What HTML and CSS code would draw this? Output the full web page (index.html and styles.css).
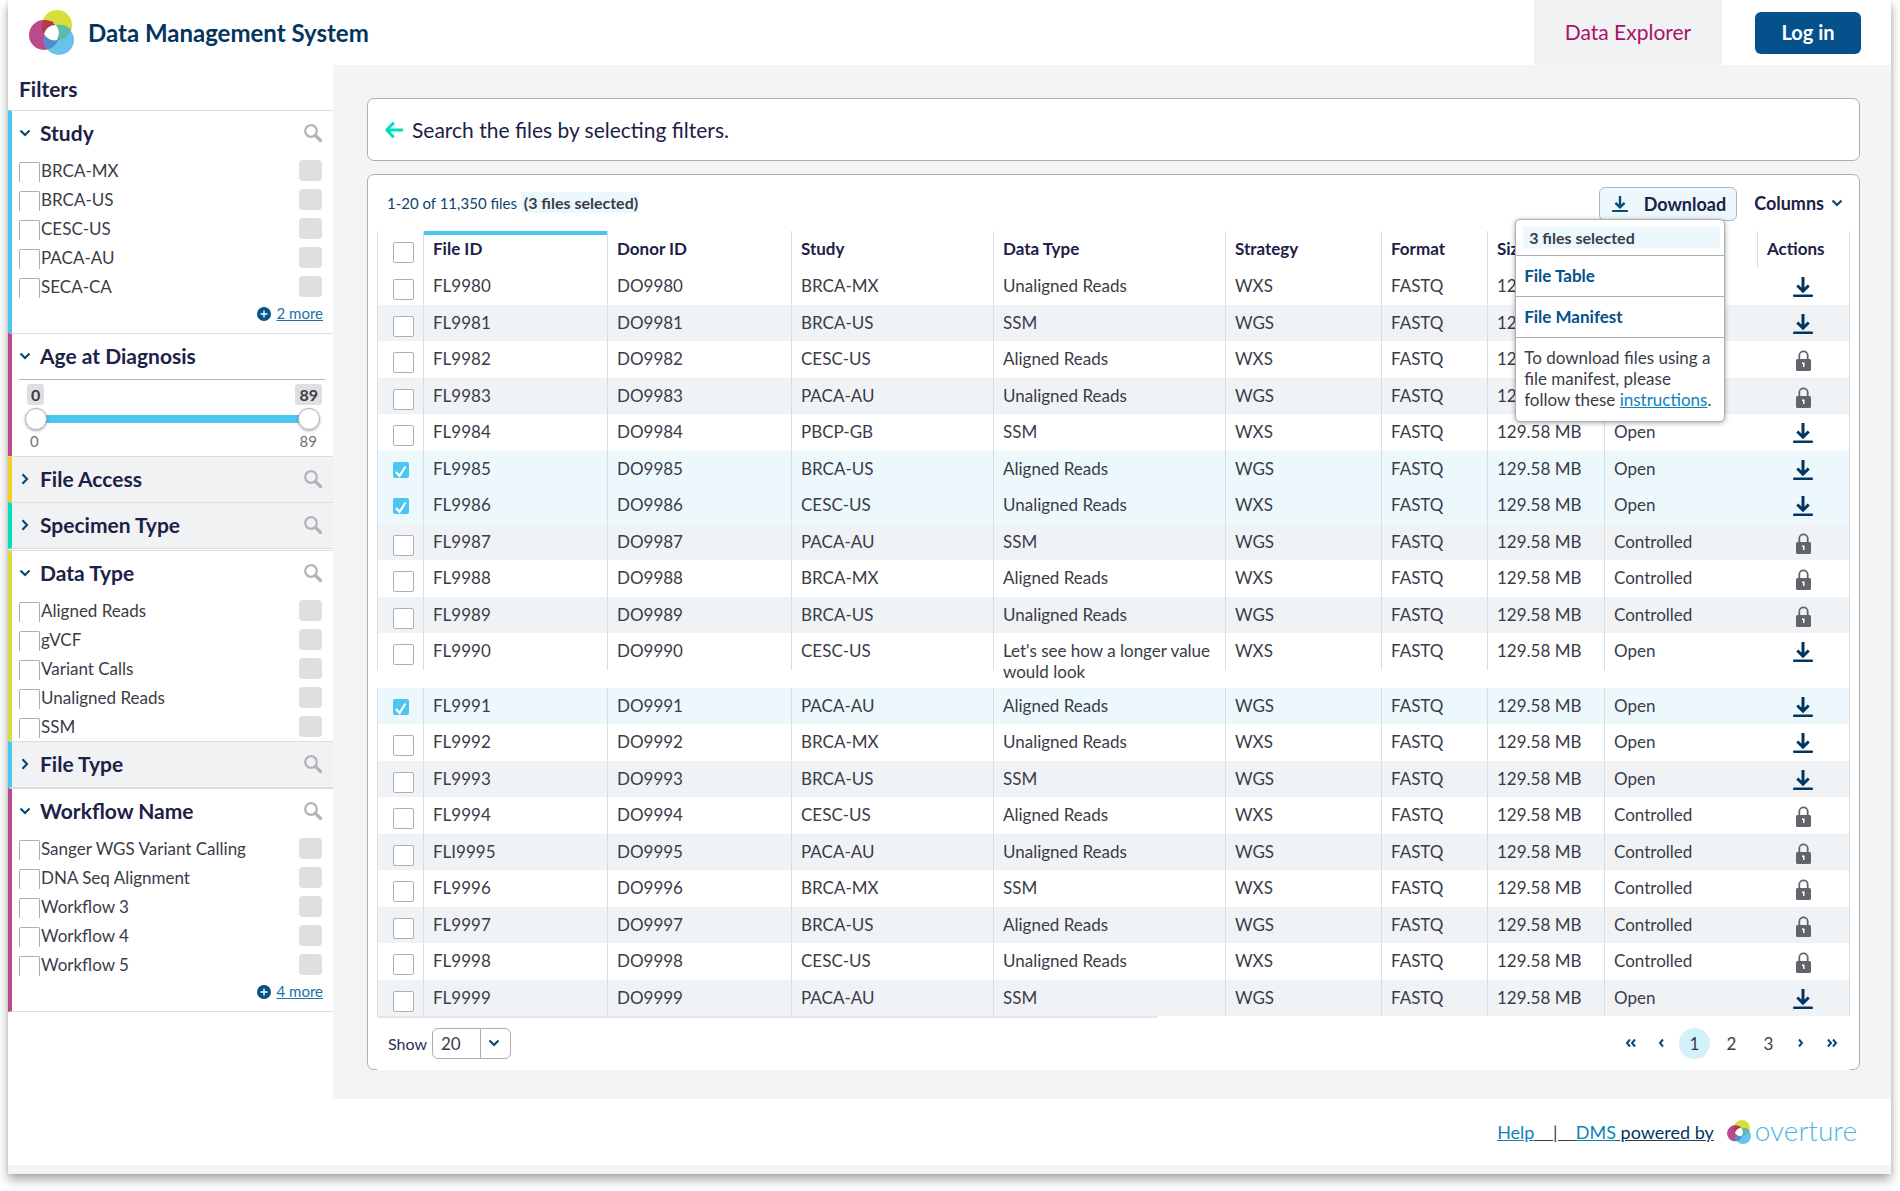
FILE: index.html
```html
<!DOCTYPE html>
<html lang="en">
<head>
<meta charset="utf-8">
<meta name="viewport" content="width=device-width, initial-scale=1">
<title>Data Management System</title>
<link rel="stylesheet" href="styles.css">
</head>
<body>
<svg class="sprite" aria-hidden="true">
  <defs>
    <clipPath id="clip-yellow"><circle cx="28" cy="15" r="15"/></clipPath>
    <clipPath id="clip-magenta"><circle cx="15" cy="25" r="15"/></clipPath>
  </defs>
  <symbol id="logo" viewBox="0 0 45 45">
    <circle cx="28" cy="15" r="15" fill="#d9df3a"/>
    <circle cx="15" cy="25" r="15" fill="#b94a8b"/>
    <circle cx="30" cy="30" r="15" fill="#68c3ea"/>
    <g clip-path="url(#clip-yellow)"><circle cx="15" cy="25" r="15" fill="#b23e4d"/><circle cx="30" cy="30" r="15" fill="#5dbba8"/></g>
    <g clip-path="url(#clip-magenta)"><circle cx="30" cy="30" r="15" fill="#528fca"/></g>
    <path d="M13 14c3-2 8-4 12-2-4 3-8 6-10 12-2-3-3-7-2-10z" fill="#b23e4d"/>
    <path d="M15 24c2-6 6-9 12-9 3 3 4 9 1 15-4 1-9 0-13-6z" fill="#fff"/>
    <path d="M27 15c5-1 10 0 15 4-2 6-7 9-12 11 1-6 0-11-3-15z" fill="#5dbba8"/>
  </symbol>
  <symbol id="down" viewBox="0 0 12 8"><path d="M1.500 1.500 6 6l4.500-4.500" fill="none" stroke="currentColor" stroke-width="2.200"/></symbol>
  <symbol id="right" viewBox="0 0 8 12"><path d="M1.500 1.200 6 6l-4.500 4.800" fill="none" stroke="currentColor" stroke-width="2.200"/></symbol>
  <symbol id="search" viewBox="0 0 18 18"><circle cx="7" cy="7" r="5.800" fill="none" stroke="currentColor" stroke-width="2.200"/><path d="m11.500 11.500 5 5" stroke="currentColor" stroke-width="3.200" stroke-linecap="round"/></symbol>
  <symbol id="plus" viewBox="0 0 14 14"><circle cx="7" cy="7" r="7" fill="currentColor"/><path d="M7 3.500v7M3.500 7h7" stroke="#fff" stroke-width="1.400"/></symbol>
  <symbol id="arrow" viewBox="0 0 18 16"><path d="M17 8H2M8 1.500 1.800 8 8 14.500" fill="none" stroke="currentColor" stroke-width="3" stroke-linejoin="round" stroke-linecap="round"/></symbol>
  <symbol id="dl" viewBox="0 0 20 20"><path d="M10 0v13.500M4.300 8.500 10 14.200l5.700-5.700" fill="none" stroke="currentColor" stroke-width="3"/><path d="M1.200 18.700h17.600" stroke="currentColor" stroke-width="2.600" stroke-linecap="round"/></symbol>
  <symbol id="lock" viewBox="0 0 15 21"><path d="M3.300 10V5.500a4.200 4.200 0 0 1 8.400 0V10" fill="none" stroke="currentColor" stroke-width="1.800"/><rect y="9" width="15" height="12" rx="1.500" fill="currentColor"/><path d="M6 12.500h2.500V17H7v-3H6z" fill="#fff"/></symbol>
  <symbol id="prev" viewBox="0 0 6 10"><path d="M5 1.500 2 5l3 3.500" fill="none" stroke="currentColor" stroke-width="2"/></symbol>
  <symbol id="first" viewBox="0 0 11 10"><path d="M5 1.500 2 5l3 3.500M10 1.500 7 5l3 3.500" fill="none" stroke="currentColor" stroke-width="2"/></symbol>
  <symbol id="next" viewBox="0 0 6 10"><path d="M1 1.500 4 5 1 8.500" fill="none" stroke="currentColor" stroke-width="2"/></symbol>
  <symbol id="last" viewBox="0 0 11 10"><path d="M1 1.500 4 5 1 8.500M6 1.500 9 5 6 8.500" fill="none" stroke="currentColor" stroke-width="2"/></symbol>
</svg>
<div class="page">
  <header class="header">
    <svg class="brand-logo"><use href="#logo"/></svg>
    <h1 class="brand">Data Management System</h1>
    <nav class="nav"><a class="tab" href="#explorer">Data Explorer</a></nav>
    <button class="login" type="button">Log in</button>
  </header>
  <div class="body">
    <aside class="sidebar">
      <h2 class="filters-title">Filters</h2>
      <section class="facet cyan">
        <div class="facet-head"><button class="toggle" type="button"><svg class="chev"><use href="#down"/></svg>Study</button><button class="find" type="button" aria-label="Search Study"><svg><use href="#search"/></svg></button></div>
        <ul class="options">
          <li><label><input type="checkbox">BRCA-MX</label><span class="count"></span></li>
          <li><label><input type="checkbox">BRCA-US</label><span class="count"></span></li>
          <li><label><input type="checkbox">CESC-US</label><span class="count"></span></li>
          <li><label><input type="checkbox">PACA-AU</label><span class="count"></span></li>
          <li><label><input type="checkbox">SECA-CA</label><span class="count"></span></li>
        </ul>
        <div class="more"><svg><use href="#plus"/></svg><a href="#study">2 more</a></div>
      </section>
      <section class="facet magenta">
        <div class="facet-head"><button class="toggle" type="button"><svg class="chev"><use href="#down"/></svg>Age at Diagnosis</button></div>
        <div class="range">
          <div class="badges"><output>0</output><output>89</output></div>
          <div class="slider">
            <input type="range" min="0" max="89" value="0" aria-label="Minimum age">
            <input type="range" min="0" max="89" value="89" aria-label="Maximum age">
          </div>
          <div class="limits"><span>0</span><span>89</span></div>
        </div>
      </section>
      <section class="facet yellow closed">
        <div class="facet-head"><button class="toggle" type="button"><svg class="chev"><use href="#right"/></svg>File Access</button><button class="find" type="button" aria-label="Search File Access"><svg><use href="#search"/></svg></button></div>
      </section>
      <section class="facet teal closed group-end">
        <div class="facet-head"><button class="toggle" type="button"><svg class="chev"><use href="#right"/></svg>Specimen Type</button><button class="find" type="button" aria-label="Search Specimen Type"><svg><use href="#search"/></svg></button></div>
      </section>
      <section class="facet lime">
        <div class="facet-head"><button class="toggle" type="button"><svg class="chev"><use href="#down"/></svg>Data Type</button><button class="find" type="button" aria-label="Search Data Type"><svg><use href="#search"/></svg></button></div>
        <ul class="options">
          <li><label><input type="checkbox">Aligned Reads</label><span class="count"></span></li>
          <li><label><input type="checkbox">gVCF</label><span class="count"></span></li>
          <li><label><input type="checkbox">Variant Calls</label><span class="count"></span></li>
          <li><label><input type="checkbox">Unaligned Reads</label><span class="count"></span></li>
          <li><label><input type="checkbox">SSM</label><span class="count"></span></li>
        </ul>
      </section>
      <section class="facet cyan closed ruled">
        <div class="facet-head"><button class="toggle" type="button"><svg class="chev"><use href="#right"/></svg>File Type</button><button class="find" type="button" aria-label="Search File Type"><svg><use href="#search"/></svg></button></div>
      </section>
      <section class="facet magenta ruled">
        <div class="facet-head"><button class="toggle" type="button"><svg class="chev"><use href="#down"/></svg>Workflow Name</button><button class="find" type="button" aria-label="Search Workflow Name"><svg><use href="#search"/></svg></button></div>
        <ul class="options">
          <li><label><input type="checkbox">Sanger WGS Variant Calling</label><span class="count"></span></li>
          <li><label><input type="checkbox">DNA Seq Alignment</label><span class="count"></span></li>
          <li><label><input type="checkbox">Workflow 3</label><span class="count"></span></li>
          <li><label><input type="checkbox">Workflow 4</label><span class="count"></span></li>
          <li><label><input type="checkbox">Workflow 5</label><span class="count"></span></li>
        </ul>
        <div class="more"><svg><use href="#plus"/></svg><a href="#workflow">4 more</a></div>
      </section>
    </aside>
    <main class="main">
      <div class="card query"><svg><use href="#arrow"/></svg><p>Search the files by selecting filters.</p></div>
      <div class="card results">
        <div class="toolbar">
          <p class="summary">1-20 of 11,350 files <strong>(3 files selected)</strong></p>
          <div class="download">
            <button class="download-btn" type="button"><svg><use href="#dl"/></svg>Download</button>
            <div class="menu">
              <p class="menu-info"><span>3 files selected</span></p>
              <button type="button">File Table</button>
              <button type="button">File Manifest</button>
              <p class="menu-help">To download files using a file manifest, please follow these <a href="#instructions">instructions</a>.</p>
            </div>
          </div>
          <button class="columns-btn" type="button">Columns<svg><use href="#down"/></svg></button>
        </div>
        <div class="table-wrap">
        <table class="files">
          <colgroup><col class="c-check"><col class="c-file"><col class="c-donor"><col class="c-study"><col class="c-type"><col class="c-strategy"><col class="c-format"><col class="c-size"><col class="c-access"><col class="c-actions"></colgroup>
          <thead><tr><th><input type="checkbox" aria-label="Select all files"></th><th class="sorted">File ID</th><th>Donor ID</th><th>Study</th><th>Data Type</th><th>Strategy</th><th>Format</th><th>Size</th><th>Access</th><th>Actions</th></tr></thead>
          <tbody>
            <tr><td><input type="checkbox" aria-label="Select FL9980"></td><td>FL9980</td><td>DO9980</td><td>BRCA-MX</td><td>Unaligned Reads</td><td>WXS</td><td>FASTQ</td><td>129.58 MB</td><td>Open</td><td><button type="button" aria-label="Download FL9980"><svg class="dl"><use href="#dl"/></svg></button></td></tr>
            <tr><td><input type="checkbox" aria-label="Select FL9981"></td><td>FL9981</td><td>DO9981</td><td>BRCA-US</td><td>SSM</td><td>WGS</td><td>FASTQ</td><td>129.58 MB</td><td>Open</td><td><button type="button" aria-label="Download FL9981"><svg class="dl"><use href="#dl"/></svg></button></td></tr>
            <tr><td><input type="checkbox" aria-label="Select FL9982"></td><td>FL9982</td><td>DO9982</td><td>CESC-US</td><td>Aligned Reads</td><td>WXS</td><td>FASTQ</td><td>129.58 MB</td><td>Controlled</td><td><svg class="lock"><use href="#lock"/></svg></td></tr>
            <tr><td><input type="checkbox" aria-label="Select FL9983"></td><td>FL9983</td><td>DO9983</td><td>PACA-AU</td><td>Unaligned Reads</td><td>WGS</td><td>FASTQ</td><td>129.58 MB</td><td>Controlled</td><td><svg class="lock"><use href="#lock"/></svg></td></tr>
            <tr><td><input type="checkbox" aria-label="Select FL9984"></td><td>FL9984</td><td>DO9984</td><td>PBCP-GB</td><td>SSM</td><td>WXS</td><td>FASTQ</td><td>129.58 MB</td><td>Open</td><td><button type="button" aria-label="Download FL9984"><svg class="dl"><use href="#dl"/></svg></button></td></tr>
            <tr class="selected"><td><input type="checkbox" checked aria-label="Select FL9985"></td><td>FL9985</td><td>DO9985</td><td>BRCA-US</td><td>Aligned Reads</td><td>WGS</td><td>FASTQ</td><td>129.58 MB</td><td>Open</td><td><button type="button" aria-label="Download FL9985"><svg class="dl"><use href="#dl"/></svg></button></td></tr>
            <tr class="selected"><td><input type="checkbox" checked aria-label="Select FL9986"></td><td>FL9986</td><td>DO9986</td><td>CESC-US</td><td>Unaligned Reads</td><td>WXS</td><td>FASTQ</td><td>129.58 MB</td><td>Open</td><td><button type="button" aria-label="Download FL9986"><svg class="dl"><use href="#dl"/></svg></button></td></tr>
            <tr><td><input type="checkbox" aria-label="Select FL9987"></td><td>FL9987</td><td>DO9987</td><td>PACA-AU</td><td>SSM</td><td>WGS</td><td>FASTQ</td><td>129.58 MB</td><td>Controlled</td><td><svg class="lock"><use href="#lock"/></svg></td></tr>
            <tr><td><input type="checkbox" aria-label="Select FL9988"></td><td>FL9988</td><td>DO9988</td><td>BRCA-MX</td><td>Aligned Reads</td><td>WXS</td><td>FASTQ</td><td>129.58 MB</td><td>Controlled</td><td><svg class="lock"><use href="#lock"/></svg></td></tr>
            <tr><td><input type="checkbox" aria-label="Select FL9989"></td><td>FL9989</td><td>DO9989</td><td>BRCA-US</td><td>Unaligned Reads</td><td>WGS</td><td>FASTQ</td><td>129.58 MB</td><td>Controlled</td><td><svg class="lock"><use href="#lock"/></svg></td></tr>
            <tr><td><input type="checkbox" aria-label="Select FL9990"></td><td>FL9990</td><td>DO9990</td><td>CESC-US</td><td>Let's see how a longer value would look</td><td>WXS</td><td>FASTQ</td><td>129.58 MB</td><td>Open</td><td><button type="button" aria-label="Download FL9990"><svg class="dl"><use href="#dl"/></svg></button></td></tr>
            <tr class="selected"><td><input type="checkbox" checked aria-label="Select FL9991"></td><td>FL9991</td><td>DO9991</td><td>PACA-AU</td><td>Aligned Reads</td><td>WGS</td><td>FASTQ</td><td>129.58 MB</td><td>Open</td><td><button type="button" aria-label="Download FL9991"><svg class="dl"><use href="#dl"/></svg></button></td></tr>
            <tr><td><input type="checkbox" aria-label="Select FL9992"></td><td>FL9992</td><td>DO9992</td><td>BRCA-MX</td><td>Unaligned Reads</td><td>WXS</td><td>FASTQ</td><td>129.58 MB</td><td>Open</td><td><button type="button" aria-label="Download FL9992"><svg class="dl"><use href="#dl"/></svg></button></td></tr>
            <tr><td><input type="checkbox" aria-label="Select FL9993"></td><td>FL9993</td><td>DO9993</td><td>BRCA-US</td><td>SSM</td><td>WGS</td><td>FASTQ</td><td>129.58 MB</td><td>Open</td><td><button type="button" aria-label="Download FL9993"><svg class="dl"><use href="#dl"/></svg></button></td></tr>
            <tr><td><input type="checkbox" aria-label="Select FL9994"></td><td>FL9994</td><td>DO9994</td><td>CESC-US</td><td>Aligned Reads</td><td>WXS</td><td>FASTQ</td><td>129.58 MB</td><td>Controlled</td><td><svg class="lock"><use href="#lock"/></svg></td></tr>
            <tr><td><input type="checkbox" aria-label="Select FLI9995"></td><td>FLI9995</td><td>DO9995</td><td>PACA-AU</td><td>Unaligned Reads</td><td>WGS</td><td>FASTQ</td><td>129.58 MB</td><td>Controlled</td><td><svg class="lock"><use href="#lock"/></svg></td></tr>
            <tr><td><input type="checkbox" aria-label="Select FL9996"></td><td>FL9996</td><td>DO9996</td><td>BRCA-MX</td><td>SSM</td><td>WXS</td><td>FASTQ</td><td>129.58 MB</td><td>Controlled</td><td><svg class="lock"><use href="#lock"/></svg></td></tr>
            <tr><td><input type="checkbox" aria-label="Select FL9997"></td><td>FL9997</td><td>DO9997</td><td>BRCA-US</td><td>Aligned Reads</td><td>WGS</td><td>FASTQ</td><td>129.58 MB</td><td>Controlled</td><td><svg class="lock"><use href="#lock"/></svg></td></tr>
            <tr><td><input type="checkbox" aria-label="Select FL9998"></td><td>FL9998</td><td>DO9998</td><td>CESC-US</td><td>Unaligned Reads</td><td>WXS</td><td>FASTQ</td><td>129.58 MB</td><td>Controlled</td><td><svg class="lock"><use href="#lock"/></svg></td></tr>
            <tr><td><input type="checkbox" aria-label="Select FL9999"></td><td>FL9999</td><td>DO9999</td><td>PACA-AU</td><td>SSM</td><td>WGS</td><td>FASTQ</td><td>129.58 MB</td><td>Open</td><td><button type="button" aria-label="Download FL9999"><svg class="dl"><use href="#dl"/></svg></button></td></tr>
          </tbody>
        </table>
        </div>
        <div class="pager">
          <label class="show" for="page-size">Show</label>
          <div class="select"><select id="page-size"><option>20</option><option>50</option><option>100</option></select><svg><use href="#down"/></svg></div>
          <nav class="pages" aria-label="Pagination">
            <button type="button" aria-label="First page"><svg class="wide"><use href="#first"/></svg></button>
            <button type="button" aria-label="Previous page"><svg><use href="#prev"/></svg></button>
            <button class="page-no current" type="button">1</button>
            <button class="page-no" type="button">2</button>
            <button class="page-no" type="button">3</button>
            <button type="button" aria-label="Next page"><svg><use href="#next"/></svg></button>
            <button type="button" aria-label="Last page"><svg class="wide"><use href="#last"/></svg></button>
          </nav>
        </div>
      </div>
    </main>
  </div>
  <footer class="footer">
    <div class="footer-links"><a href="#help">Help</a><span>    |    </span><a href="#dms">DMS</a><span class="powered"> powered by</span></div>
    <a class="overture" href="#overture"><svg><use href="#logo"/></svg>overture</a>
  </footer>
</div>
</body>
</html>
```
FILE: styles.css
```css
*, *::before, *::after { box-sizing: border-box; }

body {
  margin: 0;
  background: #fff;
  color: #3a3c47;
  font-family: Lato, "Open Sans", sans-serif;
  font-size: 17px;
  line-height: 21px;
}

h1, h2, p, ul { margin: 0; padding: 0; }
button { padding: 0; border: 0; background: none; color: inherit; font: inherit; cursor: pointer; }
svg { display: block; flex: none; }
.sprite { position: absolute; width: 0; height: 0; }

.page {
  margin: 0 9px 17px 8px;
  background: #fff;
  border-bottom: 9px solid #f4f4f4;
  box-shadow: 0 6px 10px rgba(0, 0, 0, .32), 0 0 4px rgba(0, 0, 0, .12);
}

/* Header */
.header { display: flex; align-items: center; height: 65px; padding: 0 30px 0 21px; }
.brand-logo { width: 45px; height: 45px; }
.brand { margin-left: 14px; color: #04355c; font-size: 24px; line-height: 30px; font-weight: 700; }
.nav { align-self: stretch; display: flex; margin-left: auto; }
.tab {
  display: flex; align-items: center; justify-content: center;
  width: 188px; padding-bottom: 2px;
  background: #f1f2f4;
  color: #ab1267;
  font-size: 21px;
  text-decoration: none;
}
.login {
  width: 106px; height: 42px; margin-left: 33px;
  border-radius: 6px;
  background: #04518c;
  color: #fff;
  font-size: 20px; font-weight: 700;
}

.body { display: flex; }

/* Sidebar */
.sidebar { flex: none; width: 325px; }
.filters-title { height: 45px; padding-left: 11px; color: #1c2147; font-size: 21px; line-height: 48px; font-weight: 700; }
.facet { border-top: 1px solid #dcdde1; border-left: 4px solid; }
.ruled { border-bottom: 1px solid #dcdde1; }
.group-end { margin-bottom: 1px; border-bottom: 1px solid #dcdde1; }
.facet.closed { background: #f1f2f4; }
.cyan { border-left-color: #4bc6f0; }
.magenta { border-left-color: #bb4a8c; }
.yellow { border-left-color: #f2d021; }
.teal { border-left-color: #00ddbe; }
.lime { border-left-color: #d9de3a; }
.facet-head { display: flex; align-items: center; justify-content: space-between; height: 45px; padding: 0 11px 2px 7px; }
.toggle { display: flex; align-items: center; color: #1c2147; font-size: 21px; font-weight: 700; }
.chev { width: 12px; height: 10px; margin-right: 9px; color: #0b4a75; }
.closed .chev { height: 12px; }
.find { color: #b2b3b8; }
.find svg { width: 18px; height: 18px; }

.options { display: grid; gap: 1px; list-style: none; padding: 0 11px 1px 7px; }
.options li { display: flex; align-items: center; justify-content: space-between; height: 28px; }
.options label { display: flex; align-items: center; gap: 1px; }
.options input {
  appearance: none;
  width: 21px; height: 20px; margin: 4px 0 0;
  border: 1px solid #adafb5; border-bottom: 0;
  border-radius: 2px 2px 0 0;
  background: #fff;
}
.count { width: 23px; height: 21px; border-radius: 4px; background: #dfdfe1; }
.more { display: flex; align-items: center; justify-content: flex-end; gap: 6px; height: 32px; padding: 0 10px 7px; font-size: 15px; color: #04518c; }
.more svg { width: 14px; height: 14px; }
.more a { color: #2071a8; }

.range { margin: 0 8px 0 7px; padding: 4px 5px 5px 6px; border-top: 1px solid #b4b5bc; }
.badges, .limits { display: flex; justify-content: space-between; }
.badges { padding-left: 2px; margin-right: -2px; }
.badges output { padding: 0 4px; border-radius: 3px; background: #dfdfe1; font-size: 16px; font-weight: 700; }
.slider {
  display: grid; height: 22px; margin-top: 3px;
  background: linear-gradient(#4bc6f0, #4bc6f0) center / calc(100% - 22px) 8px no-repeat;
}
.slider input { appearance: none; grid-area: 1 / 1; width: 100%; height: 22px; margin: 0; background: none; pointer-events: none; }
.slider input::-webkit-slider-thumb {
  appearance: none;
  width: 22px; height: 22px;
  border: 1px solid #b6b6ba; border-radius: 50%;
  background: #fff;
  box-shadow: 0 1px 3px rgba(0, 0, 0, .3);
  pointer-events: auto;
}
.limits { padding: 1px 3px 0 5px; height: 21px; font-size: 15px; color: #70727a; }

/* Main column */
.main { flex: 1; min-width: 0; display: grid; gap: 13px; padding: 33px 31px 29px 34px; background: #f4f4f4; }
.card { border: 1px solid #adafb3; border-radius: 7px; background: #fff; }
.query { display: flex; align-items: center; gap: 9px; height: 63px; padding: 0 17px; color: #1c2147; font-size: 21px; }
.query svg { width: 18px; height: 16px; color: #00ddbe; }
.results { padding: 0 9px; }

.toolbar { display: flex; align-items: center; height: 56px; padding: 0 7px 0 10px; }
.summary { font-size: 15px; color: #0d4470; }
.summary strong { display: inline-block; padding: 0 1px 0 3px; background: #edf8fd; color: #3a3c47; font-size: 16px; }
.download { position: relative; margin: 2px 17px 0 auto; }
.download-btn {
  display: flex; align-items: center; justify-content: space-between;
  width: 138px; height: 34px; padding: 0 10px 0 12px;
  border: 1px solid #adb7c0; border-radius: 6px;
  background: #edf8fd;
  color: #1c2147;
  font-size: 18px; font-weight: 700;
}
.download-btn svg { width: 16px; height: 16px; color: #0b4a75; }
.columns-btn { display: flex; align-items: center; gap: 7px; color: #1c2147; font-size: 18px; font-weight: 700; }
.columns-btn svg { width: 12px; height: 8px; color: #0b4a75; }
.menu {
  position: absolute; z-index: 2; top: 32px; right: 12px;
  width: 210px;
  border: 1px solid #adafb3; border-radius: 5px;
  background: #fff;
  box-shadow: 0 1px 5px rgba(0, 0, 0, .35);
}
.menu-info { padding: 7px 4px 7px 7px; font-size: 16px; font-weight: 700; }
.menu-info span { display: block; padding-left: 6px; background: #edf8fd; }
.menu button { display: block; width: 100%; height: 41px; padding: 0 8px 2px; border-top: 1px solid #adafb3; color: #04518c; font-weight: 700; text-align: left; }
.menu-help { padding: 9px 8px 11px; border-top: 1px solid #adafb3; }
.menu-help a { color: #0f83b8; }

/* Files table */
.table-wrap { border-right: 1px solid #dcdde1; background: #fff; }
.files { width: 100%; table-layout: fixed; border-collapse: collapse; }
.c-check { width: 46px; }
.c-file { width: 184px; }
.c-donor { width: 184px; }
.c-study { width: 202px; }
.c-type { width: 232px; }
.c-strategy { width: 156px; }
.c-format { width: 106px; }
.c-size { width: 117px; }
.c-access { width: 153px; }
.c-actions { width: 92px; }
.files th, .files td {
  padding: 7px 10px 6px;
  background: linear-gradient(#dcdde1, #dcdde1) left top / 1px 37px no-repeat;
  text-align: left;
  vertical-align: top;
}
.files th { color: #1c2147; font-weight: 700; }
.files .sorted { background: linear-gradient(#4bc6f0, #4bc6f0) 1px 0 / 100% 4px no-repeat, linear-gradient(#dcdde1, #dcdde1) left top / 1px 37px no-repeat; }
.files tr { height: 37px; }
.files tbody tr:nth-child(even) { height: 36px; background: #f0f3f6; }
.files tbody .selected, .files tbody .selected:nth-child(even) { background: #edf8fd; }
.files td:first-child, .files th:first-child { padding: 11px 0 0 16px; line-height: 0; }
.files td:last-child { padding: 9px 0 0; background: none; }
.files td svg { margin: 0 auto; }
.files td button { display: block; margin: 0 auto; }
.dl { width: 20px; height: 20px; color: #04355c; }
.lock { width: 15px; height: 21px; color: #62646c; }
.files input {
  appearance: none;
  width: 21px; height: 21px; margin: 0;
  border: 1px solid #adafb5; border-radius: 2px;
  background: #fff;
}
.files input:checked {
  width: 16px; height: 16px;
  border: 0;
  background: #4bc6f0 url("data:image/svg+xml,%3Csvg xmlns='http://www.w3.org/2000/svg' viewBox='0 0 16 16'%3E%3Cpath d='M3 10 6.500 14 12.500 4.500' fill='none' stroke='white' stroke-width='2.200'/%3E%3C/svg%3E");
}

/* Pagination row; covers the card's bottom edge between the corners */
.pager {
  position: relative;
  display: flex; align-items: center;
  height: 54px; margin-bottom: -1px; padding: 0 12px 0 11px;
  background: linear-gradient(#e4e6e9, #e4e6e9) left top / 53% 2px no-repeat, #fff;
}
.show { margin-right: 5px; color: #2b3058; font-size: 16px; }
.select { position: relative; }
.select select {
  appearance: none;
  display: block;
  width: 79px; height: 31px; padding: 0 8px;
  border: 1px solid #adafb3; border-radius: 6px;
  background: linear-gradient(#adafb3, #adafb3) 47px 0 / 1px 100% no-repeat #fff;
  color: inherit; font: inherit;
}
.select svg { position: absolute; top: 11px; right: 11px; width: 12px; height: 8px; color: #0b4a75; pointer-events: none; }
.pages { display: flex; align-items: center; gap: 6px; margin-left: auto; color: #0b4a75; }
.pages svg { width: 6px; height: 10px; margin: 0 9px 0 8px; }
.pages .wide { width: 11px; margin: 0 8px 0 0; }
.pages button:last-child .wide { margin: 0 0 0 8px; }
.page-no { width: 31px; height: 31px; border-radius: 50%; color: #3a3c47; }
.current { background: #d2f1fb; }

/* Footer */
.footer { display: flex; align-items: center; justify-content: flex-end; height: 66px; padding: 0 34px 0 20px; font-size: 18px; }
.footer a { color: #0f83b8; }
.footer-links { text-decoration: underline; white-space: pre; }
.powered { color: #04355c; }
.footer .overture { display: flex; align-items: center; gap: 4px; margin-left: 13px; padding-bottom: 3px; color: #4bb6e6; font-size: 28px; font-weight: 300; text-decoration: none; }
.overture svg { width: 24px; height: 24px; margin-top: 3px; }
```
